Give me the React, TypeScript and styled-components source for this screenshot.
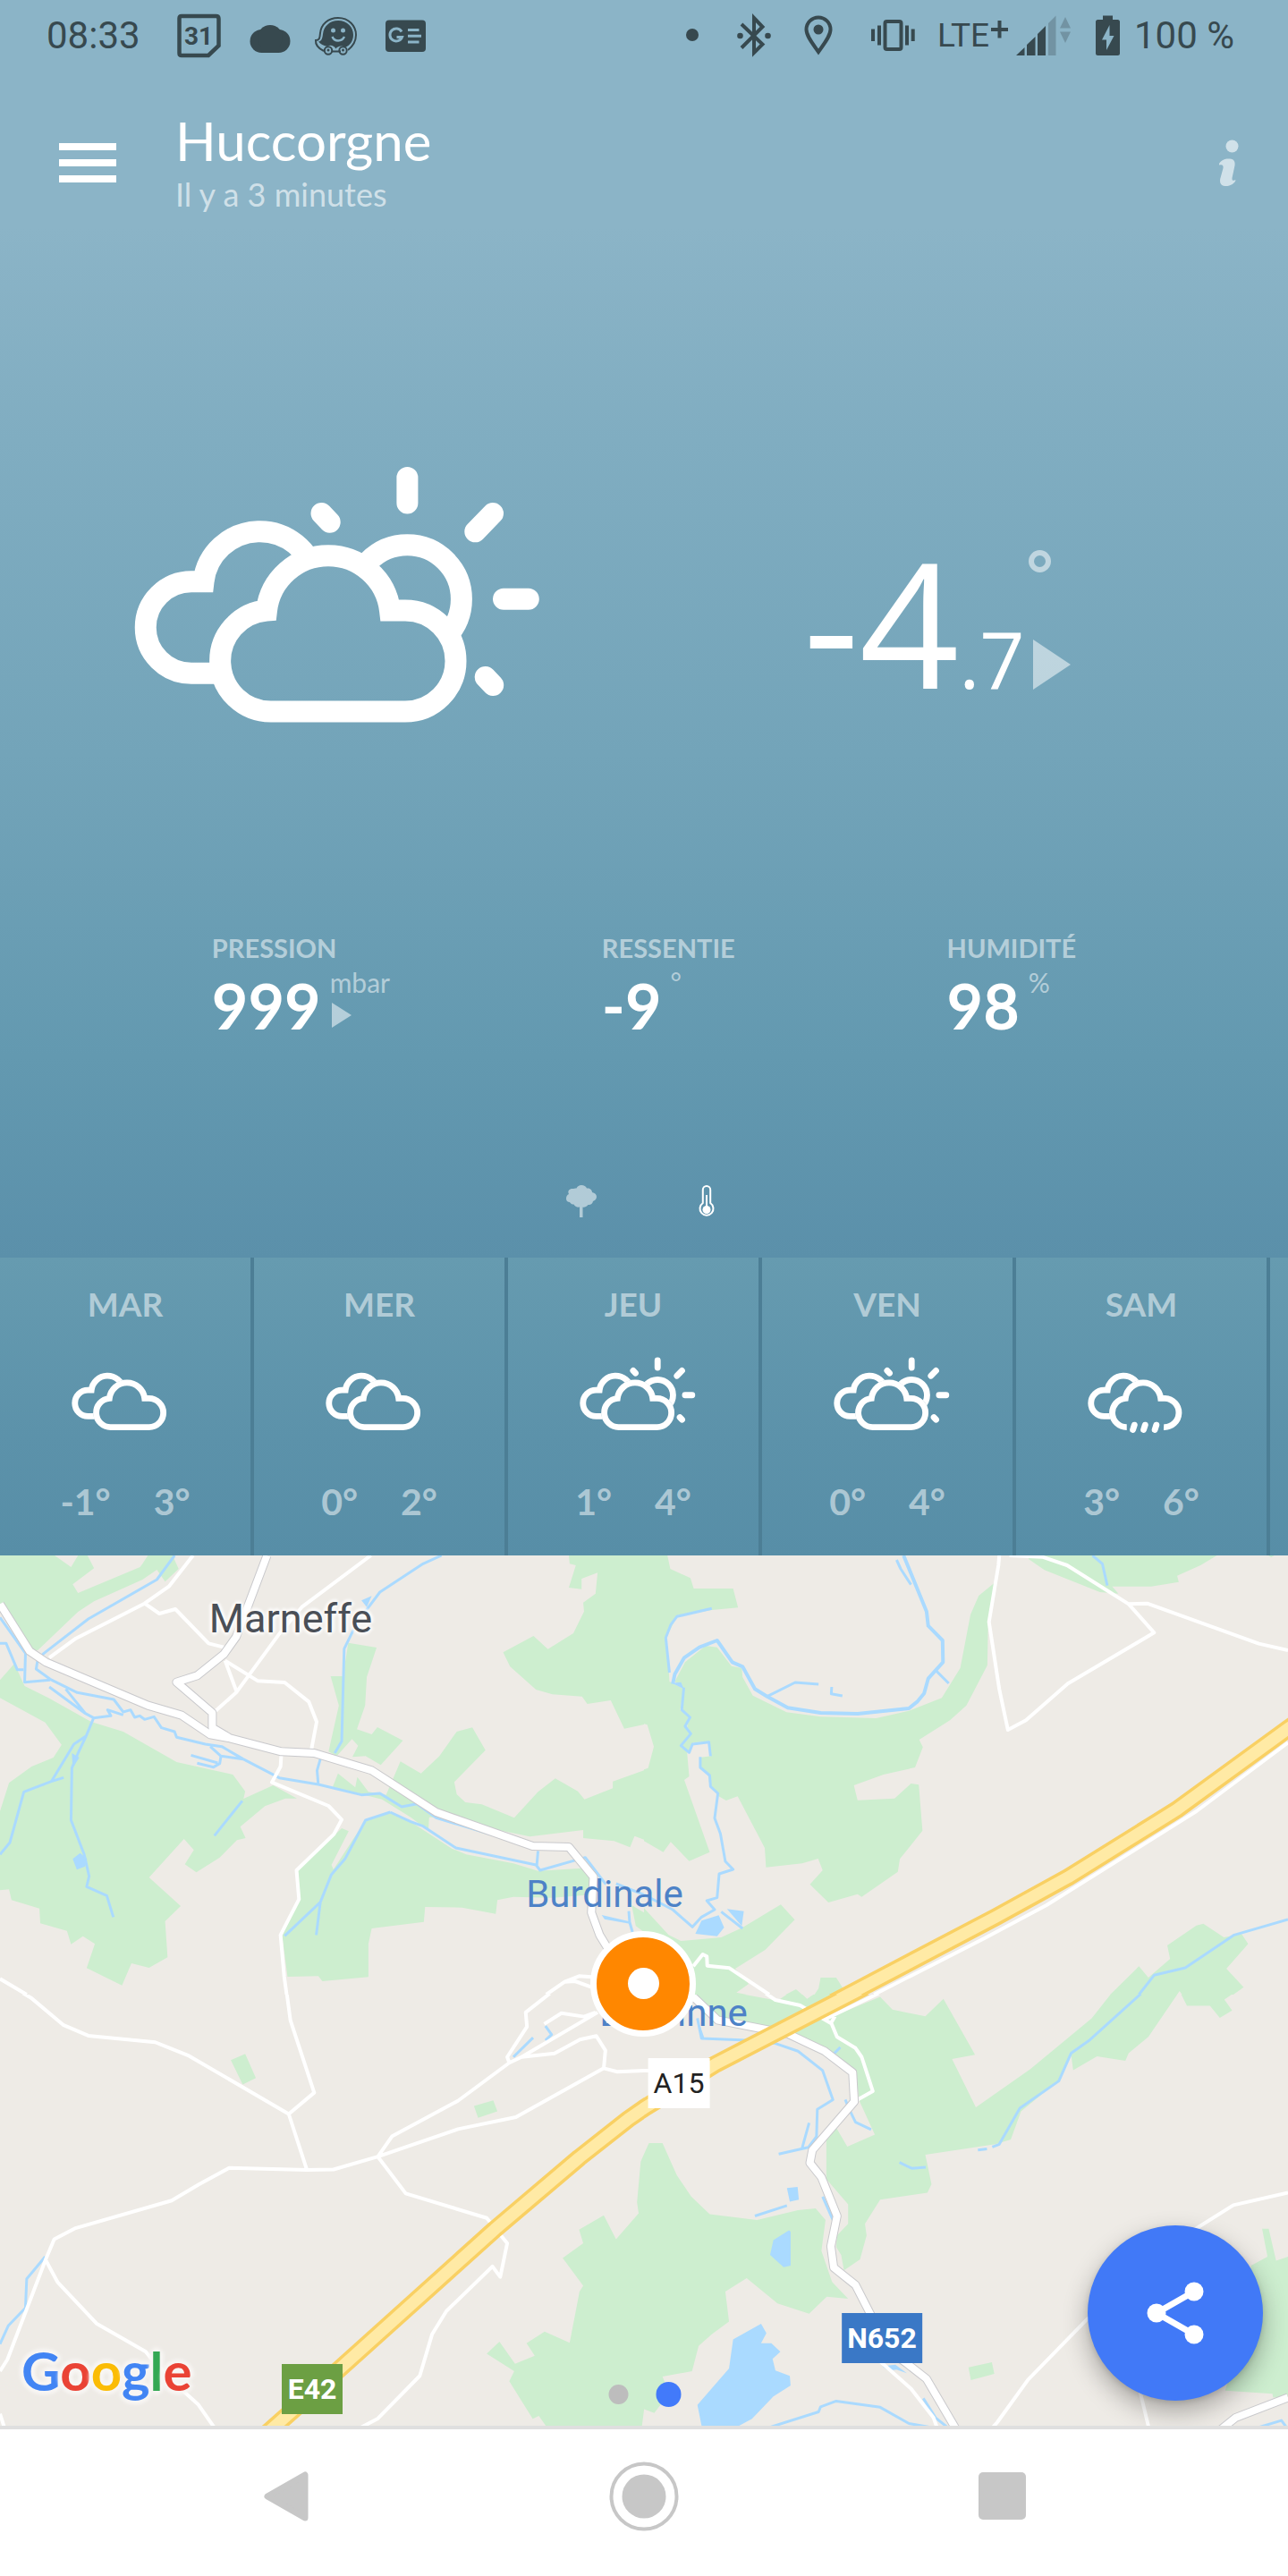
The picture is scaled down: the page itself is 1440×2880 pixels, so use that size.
import React, { useId } from "react";
import styled, { createGlobalStyle } from "styled-components";

const GlobalStyle = createGlobalStyle`
  *, *::before, *::after { box-sizing: border-box; }
  html, body { margin: 0; padding: 0; background: #ffffff; }
  button { margin: 0; padding: 0; border: 0; background: none; font: inherit; color: inherit; cursor: pointer; }
  ul, h1, p, dl, dd, dt { margin: 0; padding: 0; list-style: none; }
  svg { display: block; }
`;

const soft = "rgba(255, 255, 255, 0.52)";
const ink = "#37494f";

const Screen = styled.div`
  display: flex;
  flex-direction: column;
  font-family: Lato, "Open Sans", sans-serif;
  color: #ffffff;
  overflow: hidden;
`;

const Sky = styled.section`
  display: flex;
  flex-direction: column;
  background: linear-gradient(
    #8bb4c7 0%,
    #8bb4c7 18%,
    #80adc1 35%,
    #73a4b9 60%,
    #6399b0 84%,
    #5b90aa 100%
  );
`;

/* ---------- status bar ---------- */

const StatusBar = styled.div`
  display: flex;
  justify-content: space-between;
  align-items: center;
  height: 80px;
  padding: 0 60px 0 52px;
  color: ${ink};
  font-family: Roboto, sans-serif;
  font-size: 42px;
  line-height: 50px;
  white-space: nowrap;
`;

const StatusGroup = styled.div`
  display: flex;
  align-items: center;
`;

const StatusText = styled.span<{ $before?: number }>`
  margin-left: ${(p) => p.$before ?? 0}px;
`;

const Network = styled.span`
  margin-left: 25px;
  font-size: 37px;
`;

const StatusGlyph = styled.svg<{ $before: number }>`
  flex: none;
  margin-left: ${(p) => p.$before}px;
  height: 50px;
  fill: ${ink};
  stroke: none;
`;

const GlyphText = styled.text`
  font-family: Roboto, sans-serif;
  font-weight: 700;
  font-size: 28px;
`;

function Glyph({
  x,
  w,
  before,
  children,
}: {
  x: number;
  w: number;
  before: number;
  children: React.ReactNode;
}) {
  return (
    <StatusGlyph $before={before} width={w} viewBox={`${x} 15 ${w} 50`} aria-hidden="true">
      {children}
    </StatusGlyph>
  );
}

function Status() {
  return (
    <StatusBar>
      <StatusGroup>
        <StatusText>08:33</StatusText>
        <Glyph x={197} w={50} before={40}>
          <path
            d="M203 18H241.500Q244.500 18 244.500 21V51L233 62H203Q200.500 62 200.500 59.500V20.500Q200.500 18 203 18Z"
            fill="none"
            stroke={ink}
            strokeWidth="4.500"
          />
          <GlyphText x={222} y={50} textAnchor="middle">
            31
          </GlyphText>
        </Glyph>
        <Glyph x={279} w={46} before={32}>
          <circle cx="292.500" cy="46" r="13" />
          <circle cx="311.500" cy="46" r="13" />
          <circle cx="302" cy="42" r="14" />
          <rect x="292" y="44" width="20" height="15" />
        </Glyph>
        <Glyph x={351} w={49} before={26}>
          <path
            d="M362 57C356 54 352.500 50 353 45C357 45 357.500 43 358 37C359 27 367 20 378 20C390 20 398 29 398 39C398 47 394 52 389 56"
            fill="none"
            stroke={ink}
            strokeWidth="2"
          />
          <path d="M366 52C361 51 358 49 356 46.500C360 46 360.500 42 361 38C362 29 369 23 378 23C388 23 395 30 395 39C395 46 391 51 386 53C382 50 377 52 375.500 54.500C373 50.500 369 50 366 52Z" />
          <circle cx="372.500" cy="34" r="2.500" fill="#8bb4c7" />
          <circle cx="383.500" cy="34" r="2.500" fill="#8bb4c7" />
          <path d="M371.500 41C374 47 382 47 385 41" fill="none" stroke="#8bb4c7" strokeWidth="2.500" />
          <path d="M371 57.500H381" stroke={ink} strokeWidth="2" />
          <circle cx="367" cy="56.500" r="4.200" fill="none" stroke={ink} strokeWidth="2" />
          <circle cx="383.500" cy="56.500" r="4.200" fill="none" stroke={ink} strokeWidth="2" />
          <circle cx="367" cy="56" r="1.500" />
          <circle cx="383.500" cy="56" r="1.500" />
        </Glyph>
        <Glyph x={431} w={45} before={31}>
          <rect x="431" y="22.500" width="45" height="35.500" rx="4" />
          <path
            d="M449 35.500A7 7 0 1 0 449.500 41.500H443.500"
            fill="none"
            stroke="#8bb4c7"
            strokeWidth="3"
          />
          <path d="M456 33.500H468.500M456 40.300H471M456 47H468.500" stroke="#8bb4c7" strokeWidth="3" />
        </Glyph>
      </StatusGroup>
      <StatusGroup>
        <Glyph x={767} w={14} before={0}>
          <circle cx="774" cy="39" r="7" />
        </Glyph>
        <Glyph x={824} w={38} before={43}>
          <path
            d="M829 27L852.500 49.500L843 59V20L852.500 30L829 53.500"
            fill="none"
            stroke={ink}
            strokeWidth="4"
          />
          <circle cx="827.500" cy="40" r="3.300" />
          <circle cx="858.500" cy="40" r="3.300" />
        </Glyph>
        <Glyph x={899} w={32} before={37}>
          <path
            d="M915 58C908 48 901.500 40 901.500 33A13.500 13.500 0 0 1 928.500 33C928.500 40 922 48 915 58Z"
            fill="none"
            stroke={ink}
            strokeWidth="4"
          />
          <circle cx="915" cy="33" r="5.500" />
        </Glyph>
        <Glyph x={974} w={49} before={43}>
          <rect x="989.500" y="24" width="18" height="31" rx="2" fill="none" stroke={ink} strokeWidth="4" />
          <path d="M976 32.500V46M983 28.500V50.500M1014 28.500V50.500M1020.700 32.500V46" stroke={ink} strokeWidth="4" />
        </Glyph>
        <Network>LTE</Network>
        <Glyph x={1109} w={19} before={2}>
          <path d="M1118.500 23V42.500M1109 33H1128" stroke={ink} strokeWidth="4" />
        </Glyph>
        <Glyph x={1137} w={62} before={9}>
          <path d="M1137 62L1146.500 53V62ZM1149 50L1158.500 41V62H1149ZM1161 38L1170 29V62H1161Z" />
          <path
            d="M1173 26L1181.500 17.500V62H1173ZM1186 31.500L1192 19L1198 31.500ZM1186 35.500H1198L1192 48Z"
            opacity="0.300"
          />
        </Glyph>
        <Glyph x={1226} w={27} before={27}>
          <path d="M1234 17.500H1245V22H1250.500Q1253 22 1253 24.500V59.500Q1253 62 1250.500 62H1228.500Q1226 62 1226 59.500V24.500Q1226 22 1228.500 22H1234Z" />
          <path d="M1241.500 28L1233 44.500H1238V56L1246.500 40H1241.500Z" fill="#8bb4c7" />
        </Glyph>
        <StatusText $before={16}>100 %</StatusText>
      </StatusGroup>
    </StatusBar>
  );
}

/* ---------- app bar ---------- */

const AppBar = styled.header`
  display: flex;
  align-items: flex-start;
  padding: 40px 55px 0 66px;
`;

const MenuButton = styled.button`
  display: flex;
  flex-direction: column;
  gap: 10px;
  width: 64px;
  padding: 40px 0 36px;

  span {
    height: 8px;
    background: #ffffff;
  }
`;

const Place = styled.div`
  flex: 1;
  padding-left: 66px;
`;

const PlaceName = styled.h1`
  font-size: 60px;
  line-height: 74px;
  font-weight: 400;
`;

const Updated = styled.p`
  font-size: 36px;
  line-height: 46px;
  color: rgba(255, 255, 255, 0.6);
`;

const InfoButton = styled.button`
  padding-top: 36px;
`;

/* ---------- current weather ---------- */

const Current = styled.div`
  display: grid;
  grid-template-columns: 1fr 1fr;
  justify-items: center;
  align-items: start;
  padding-top: 280px;
`;

const Temperature = styled.div`
  display: flex;
  justify-self: start;
  gap: 4px;
  margin-top: 75px;
  padding-left: 178px;
  font-family: "Open Sans", "Noto Sans", sans-serif;
  font-weight: 500;
`;

const Degrees = styled.span`
  font-size: 195px;
  line-height: 200px;
  white-space: nowrap;

  small {
    font-size: 88px;
    line-height: 88px;
  }
`;

const TemperatureSide = styled.span`
  display: flex;
  flex-direction: column;
  justify-content: space-between;
  padding: 20px 0 24px;
`;

const Ring = styled.span`
  width: 25px;
  height: 25px;
  border: 6px solid ${soft};
  border-radius: 50%;
`;

const Trend = styled.svg`
  fill: ${soft};
`;

const Metrics = styled.dl`
  display: flex;
  justify-content: space-evenly;
  padding-top: 222px;
`;

const MetricName = styled.dt`
  font-size: 29px;
  line-height: 36px;
  font-weight: 700;
  color: ${soft};
`;

const MetricValue = styled.dd`
  display: flex;
  gap: 10px;
  margin-top: 6px;
  font-size: 70px;
  line-height: 80px;
  font-weight: 700;
`;

const Unit = styled.span`
  display: flex;
  flex-direction: column;
  gap: 9px;
  font-size: 30px;
  line-height: 28px;
  font-weight: 400;
  color: ${soft};
`;

const Tabs = styled.nav`
  display: flex;
  justify-content: center;
  gap: 68px;
  padding: 143px 0 27px;
`;

const TabButton = styled.button<{ $active?: boolean }>`
  display: grid;
  place-items: center;
  width: 72px;
  height: 72px;
  color: ${(p) => (p.$active ? "#ffffff" : soft)};
`;

/* ---------- weather icons ---------- */

type Weather = "cloudy" | "sunny" | "rainy";

const FRONT =
  "M303 795.500A56.600 56.600 0 0 1 298 682.500A69.500 69.500 0 0 1 436 682.500H453A56.500 56.500 0 0 1 453 795.500Z";
const FRONT_OPEN =
  "M303 795.500A56.600 56.600 0 0 1 298 682.500A69.500 69.500 0 0 1 436 682.500H453A56.500 56.500 0 0 1 448 795.500";

function WeatherIcon({ kind, width }: { kind: Weather; width: number }) {
  const id = useId();
  return (
    <svg
      width={width}
      viewBox="104 520 512 300"
      fill="none"
      stroke="#ffffff"
      strokeWidth="24"
      role="img"
      aria-label={kind}
    >
      <mask id={id} maskUnits="userSpaceOnUse" x="104" y="520" width="512" height="300">
        <rect x="104" y="520" width="512" height="300" fill="#ffffff" stroke="none" />
        <path d={FRONT} fill="#000000" stroke="#000000" strokeWidth="22" />
      </mask>
      <g mask={`url(#${id})`}>
        <path d="M262 752.800H214A51.200 51.200 0 0 1 214 650.300H227.500A63.500 63.500 0 0 1 353 646" />
        {kind === "sunny" && <circle cx="455.400" cy="669.800" r="60.500" />}
      </g>
      <path d={kind === "rainy" ? FRONT_OPEN : FRONT} />
      {kind === "sunny" && (
        <path
          strokeLinecap="round"
          d="M455.400 534V562.500M563 669.800H590.800M551 574L531.300 594.300M359.500 574L368.700 583.700M542.700 757L551.200 766"
        />
      )}
      {kind === "rainy" && (
        <path strokeLinecap="round" d="M333 787L327 806M375 787L369 806M419 787L413 806" />
      )}
    </svg>
  );
}

/* ---------- forecast ---------- */

const Forecast = styled.ul`
  display: flex;
  overflow: hidden;
  background: linear-gradient(#669bb0, #5c92aa 60%, #578ea7);
`;

const Day = styled.li`
  flex: 0 0 284px;
  display: flex;
  flex-direction: column;
  align-items: center;
  padding: 30px 0 34px;
  border-right: 4px solid #4c7e95;
  color: ${soft};
  font-weight: 700;
`;

const DayName = styled.span`
  margin-bottom: 37px;
  font-size: 37px;
  line-height: 44px;
`;

const DayRange = styled.span`
  display: flex;
  gap: 48px;
  margin-top: 50px;
  font-size: 41px;
  line-height: 52px;
`;

const days: { name: string; kind: Weather; low: string; high: string }[] = [
  { name: "MAR", kind: "cloudy", low: "-1°", high: "3°" },
  { name: "MER", kind: "cloudy", low: "0°", high: "2°" },
  { name: "JEU", kind: "sunny", low: "1°", high: "4°" },
  { name: "VEN", kind: "sunny", low: "0°", high: "4°" },
  { name: "SAM", kind: "rainy", low: "3°", high: "6°" },
];

/* ---------- map ---------- */

const MapPanel = styled.section`
  position: relative;
  overflow: hidden;
  background: #eeebe6;
  font-family: Roboto, sans-serif;
`;

const MapSvg = styled.svg`
  width: 100%;
  height: auto;

  path {
    vector-effect: non-scaling-stroke;
    stroke-linejoin: round;
  }
`;

const Wood = styled.path`
  fill: #cdeecf;
`;
const Water = styled.path`
  fill: #aadaff;
`;
const Stream = styled.path`
  fill: none;
  stroke: #aadaff;
  stroke-width: 3px;
`;
const River = styled(Stream)`
  stroke-width: 4px;
`;
const Lane = styled.path`
  fill: none;
  stroke: #ffffff;
  stroke-width: 4px;
`;
const RoadCase = styled.path`
  fill: none;
  stroke: #c9c9cc;
  stroke-width: 10px;
`;
const Road = styled(RoadCase)`
  stroke: #ffffff;
  stroke-width: 8px;
`;
const MotorwayCase = styled.path`
  fill: none;
  stroke: #f9d063;
  stroke-width: 20px;
`;
const Motorway = styled(MotorwayCase)`
  stroke: #ffeaa5;
  stroke-width: 13px;
`;

interface Tile {
  id: string;
  transform: string;
  clip: [number, number];
  wood: string;
  water: string;
  stream: string;
  river: string;
  lane: string;
  road: string;
  motorway: string;
}

const tiles: Tile[] = [
  {
    id: "nw",
    transform: "translate(0 -9) scale(0.459184 0.333333)",
    clip: [0, 1500],
    wood:
      "M0 0L133 27 173 66 190 27 213 27 229 70 177 124 190 153 341 66 347 55 360 27 420 27 435 72 402 115 382 75 347 108 229 181 190 216 92 345 70 345 47 290 80 162 105 178 110 236 92 300 72 340 0 190Z" +
      "M35 390L60 465 118 505 222 585 300 618 430 720 567 762 597 818 593 843 665 798 723 842 695 842 645 868 585 937 598 975 577 982 535 1040 478 1090 450 1063 472 1015 448 978 363 1107 440 1203 402 1254 408 1375 363 1410 320 1395 297 1469 211 1411 231 1330 202 1304 173 1331 163 1286 98 1261 96 1211 28 1183 22 1147 0 1150 0 885 22 790 77 735 130 705 150 662 110 587 0 505 0 445Z" +
      "M848 320L917 336 893 435 889 530 869 610 905 627 919 603 981 648 927 730 890 700 858 703 872 665 857 643 820 700 800 685 825 530 805 432 835 432Z" +
      "M823 758L865 805 870 770 897 820 940 830 975 718 1025 758 1070 700 1112 618 1150 604 1182 680 1106 787 1112 828 1133 855 1173 862 1252 907 1310 820 1352 775 1407 818 1423 845 1492 808 1492 785 1568 748 1568 980 1545 968 1534 1006 1495 985 1420 975 1420 948 1290 970 1060 905 1045 905 1043 950 1000 905 930 845 810 803Z" +
      "M1385 27L1387 55 1402 60 1385 135 1416 140 1416 105 1455 85 1450 155 1420 185 1422 215 1396 288 1334 341 1299 297 1225 352 1242 400 1305 477 1345 493 1417 500 1430 525 1487 513 1520 608 1568 594 1568 0Z" +
      "M890 915L950 890 1000 920 1100 1010 1135 1030 1250 1060 1310 1085 1435 1075 1440 1165 1345 1175 1250 1172 1211 1183 1207 1229 1125 1208 1035 1206 1032 1256 905 1278 897 1330 897 1441 785 1455 775 1438 700 1440 687 1303 725 1180 722 1085 832 942 849 952 807 1065 812 1080Z" +
      "M1538 1200L1568 1225 1568 1290 1548 1270Z",
    water:
      "M177 1045L195 1025 212 1045 207 1070 187 1081ZM880 178L905 163 893 200ZM175 690L193 705 177 740ZM1465 1233L1533 1255 1533 1262 1472 1247Z",
    stream:
      "M425 27L382 108 215 240 107 355 92 375 88 408 122 442 188 487 277 510 300 552 318 545 328 570 340 565 352 577 375 568 393 605 425 618 430 637 500 660 540 668 592 710 680 773 775 795 880 830 925 825 978 870 1015 860 1062 907 1290 1002" +
      "M0 235L62 355 60 452 122 445M0 322L15 322 42 410 57 410M120 468L208 557 228 572 270 565 262 545 300 562M160 475L208 557M228 572L210 632 190 690 175 740 173 915 205 1030 217 1103 211 1138 260 1168 276 1240M210 632L180 660 125 785 58 820 24 990 0 1030M125 785L155 772M590 850L522 967M465 697L530 723M480 724L520 737 535 725 538 700 512 668M538 700L592 710" +
      "M1075 27L1030 55 925 150 870 250 838 340 832 650 815 690M780 710L772 748 775 795M950 888L1000 920 1030 935 1110 1008 1305 1065 1315 1083 1425 1040 1475 1130M950 888L890 915 840 1045 807 1097 780 1190 693 1303M780 1190L770 1300M1310 1018L1307 1065M1531 1220L1533 1257 1540 1290M1500 1128L1568 1165",
    river: "",
    lane:
      "M470 27L412 130 352 188 185 305 120 370M352 188L388 222 427 207 508 322 545 335M903 27L735 200 680 290 575 487 525 548M548 380L577 487M548 380L628 448 693 453 752 518 771 585 758 680M685 695L683 735 662 788 800 867 832 913 813 962 722 1083 728 1180 683 1300 692 1440 698 1500M0 1447L65 1500M1330 1500L1375 1457 1410 1438 1440 1441M1375 1457L1400 1455 1440 1475",
    road:
      "M0 190L72 348 112 385 360 530 442 563 512 628 560 640 685 685 765 690 905 748 1062 888 1297 1002 1385 1005 1445 1105 1440 1225 1460 1300 1480 1345M650 27L600 210 575 300 545 358 480 430 430 452 517 555 517 605 560 640",
    motorway: "",
  },
  {
    id: "ne",
    transform: "translate(720 -9) scale(0.459184 0.333333)",
    clip: [0, 1500],
    wood:
      "M0 0L57 0 57 27 64 72 113 103 121 138 217 138 229 202 165 210 80 232 55 300 62 450 97 475 88 545 112 570 100 600 115 625 90 660 105 690 110 768 98 780 160 1022 110 1052 65 988 47 1022 0 985 0 745 10 740 24 668 8 595 0 592Z" +
      "M150 330L178 335 213 398 238 405 240 435 265 497 347 553 430 568 565 573 645 548 725 505 770 405 795 225 815 162 855 117 838 250 836 395 785 530 745 580 670 645 679 670 660 738 583 762 511 798 520 848 610 842 650 792 669 796 678 950 623 1045 618 1088 530 1172 520 1163 449 1191 404 1130 435 1083 424 1044 385 1060 297 1073 294 1008 228 835 200 849 182 835 160 800 155 755 135 735 135 705 163 700 160 650 120 655 105 690 90 660 115 625 105 600 112 570 90 540 97 475 75 450 100 385Z" +
      "M935 27L1395 27 1355 60 1298 95 1302 116 1235 131 1140 131 1155 155 1110 150 975 76 937 40ZM1520 27L1535 27 1527 33Z" +
      "M0 1210L60 1300 90 1320 188 1308 240 1275 333 1198 367 1249 295 1350 222 1413 255 1464 225 1493 250 1500 0 1500Z" +
      "M1345 1268L1362 1262 1412 1308 1455 1297 1471 1330 1418 1413 1460 1475 1435 1500 1310 1500 1304 1488 1298 1500 1135 1500 1150 1480 1205 1405 1228 1443 1281 1380 1274 1335Z" +
      "M415 1500L425 1480 430 1443 468 1443 485 1480 460 1500ZM345 1500L370 1482 385 1500Z",
    water:
      "M140 1252L182 1234 195 1275 178 1304 125 1296ZM202 1213L243 1220 238 1270ZM68 455L90 452 97 475Z",
    stream:
      "M165 205L80 232 65 260 53 303 62 420M300 500L368 453 425 459M457 468L456 491 483 498M710 412L742 456M615 42L625 72 650 125M97 470L92 545 112 570 100 600 114 625 90 665 110 688 118 660 158 653 162 700M137 703L137 738 160 765 162 802 180 825 172 908 186 960 198 1053 217 1080 183 1095 178 1175 153 1185 172 1215 140 1240 118 1273 70 1215 0 1165M188 1222L240 1278M1092 27L1116 55 1128 128M1568 1248L1437 1300 1318 1410 1242 1435 1205 1500",
    river:
      "M70 458L75 425 98 370 135 335 178 312 215 385 240 400 270 475 300 500 350 538 430 555 520 558 645 540 665 518 682 490 692 440 728 385 727 312 692 263 688 215 632 27",
    lane:
      "M865 27L863 60 840 250 865 475 886 612 930 580 1032 457 1242 286 1180 190 1030 60 970 32 890 27M1180 190L1225 188 1497 323 1568 345M1568 655L1345 885 980 1200 830 1310 560 1500M120 1405L143 1365 153 1372 154 1403 208 1411 305 1500",
    road: "",
    motorway: "M1600 577L1568 608 1297 880 1033 1106 855 1241 497 1500 450 1534",
  },
  {
    id: "sw",
    transform: "translate(0 461) scale(0.459184 0.433673)",
    clip: [69.2, 1200],
    wood:
      "M562 238L597 222 623 284 591 301ZM1154 356L1201 342 1211 370 1164 387Z" +
      "M1568 480L1560 500 1551 605 1555 633 1500 700 1470 638 1410 675 1420 710 1370 748 1420 820 1411 835 1387 967 1326 938 1282 968 1302 1000 1254 1021 1216 964 1185 995 1252 1040 1240 1066 1297 1163 1312 1155 1335 1190 1562 1190 1568 1140Z",
    water: "",
    stream: "M110 745L65 802 62 877 20 923 0 970M1298 180L1250 230M1328 150L1343 172 1328 187",
    river: "",
    lane:
      "M0 32L75 77 155 148 215 175 378 192 460 227 703 377 747 520M690 0L707 135 765 322 703 377M0 1040L18 1010 112 750 132 700 182 672 418 600 485 558 558 516 747 521 812 520 920 487 1115 416 1256 385 1470 259 1503 268 1568 265M112 755L140 810 235 917 355 990 370 1010 450 1095 482 1125 525 1190M0 1150L12 1190M920 487L955 434 1115 343 1240 245 1270 230 1350 221 1412 185 1452 176 1474 213 1470 259M1240 245L1235 230 1283 152 1280 115 1375 36 1410 20 1440 25M1375 36L1400 34 1440 48M1270 230L1455 115M1325 145L1367 117 1422 126 1450 115M920 487L988 582 1185 645 1235 710 1218 797 1199 770 1087 885 1052 945 1022 1052 920 1162 870 1190",
    road: "",
    motorway: "M1600 340L1568 362 1530 390 1410 490 1205 674 827 1034 650 1200",
  },
  {
    id: "se",
    transform: "translate(720 461) scale(0.459184 0.433673)",
    clip: [69.2, 1200],
    wood:
      "M0 0L205 0 255 42 225 65 325 85 370 53 397 80 425 60 432 25 470 25 485 50 400 110 440 130 400 170 360 168 180 135 125 80Z" +
      "M575 75L605 108 685 125 729 80 806 224 750 235 808 360 940 262 1090 130 1150 50 1202 0 1418 0 1460 48 1413 82 1432 110 1402 129 1378 98 1322 98 1304 60 1228 178 1180 220 1172 240 1103 228 1045 264 1040 225 1010 290 918 370 893 443 855 455 685 482 700 558 690 580 575 598 538 660 542 690 526 752 487 780 480 740 468 720 470 690 497 660 497 610 444 545 444 430 468 412 495 461 562 430 525 345 515 270 440 215 350 165 460 125Z" +
      "M0 480L12 452 45 452 80 535 115 590 160 635 275 650 375 625 418 620 442 650 432 730 458 810 497 853 445 848 402 892 325 865 250 800 198 835 207 912 165 945 133 975 117 1040 45 1054 55 1080 45 1120 25 1148 0 1138Z" +
      "M790 1030L847 1017 853 1047 796 1063ZM1505 673L1521 673 1539 755 1568 745 1568 1105 1532 1108 1530 1098 1415 1090 1440 1000 1470 900 1478 768 1518 745Z",
    water:
      "M348 568L374 565 377 598 355 603ZM315 702L353 677 357 680 357 768 340 772 307 740ZM217 958L285 918 298 942 285 968 310 968 332 990 313 1008 320 1038 355 1052 357 1077 315 1105 263 1163 215 1190 142 1190 130 1127 207 1033ZM580 1027L612 1023 640 1045 615 1036 595 1038ZM130 130L140 182 148 184Z",
    stream:
      "M130 130L140 182 250 187 320 195 375 215 435 265 460 340 422 365 420 435 400 463 328 480M402 400L385 465M490 340L500 365 515 398 553 417M478 205L462 222M1320 0L1242 18 1215 62 1083 188 1040 220 1010 292 915 362 865 455 848 462M813 470L835 467M622 502L652 517 686 514M270 640L348 613M435 590L460 650M290 1190L425 1145 430 1132 468 1117 575 1133 645 1175 700 1185M680 1110L710 1160 745 1190M1480 1190L1552 1167 1568 1190",
    river: "",
    lane:
      "M205 0L320 83 380 97 455 143 465 125M700 0L440 133M455 140L470 178 515 207 530 230 557 318 520 340M0 265L20 265M570 1010L650 1085 705 1160 715 1190M1568 580L1435 612 1340 675 1080 905 935 1062 860 1172 845 1190M1205 1080L1230 1190",
    road:
      "M115 70L125 80 180 135 350 170 440 215 508 270 512 345 410 470 404 503 432 540 470 640 455 718 462 773 515 818 550 890 600 990 640 1020 688 1060 760 1190M1568 1108L1440 1160 1405 1190",
    motorway: "M674 -25L628 0 175 248 0 362 -32 384",
  },
];

function MapDrawing() {
  return (
    <MapSvg viewBox="0 0 1440 973" aria-hidden="true">
      {tiles.map((t) => (
        <g key={t.id} transform={t.transform}>
          <clipPath id={`tile-${t.id}`}>
            <rect x="0" y={t.clip[0]} width="1568" height={t.clip[1] - t.clip[0]} />
          </clipPath>
          <g clipPath={`url(#tile-${t.id})`}>
            <Wood d={t.wood} />
            <Water d={t.water} />
            <Stream d={t.stream} />
            <River d={t.river} />
            <Lane d={t.lane} />
            <RoadCase d={t.road} />
            <Road d={t.road} />
            <MotorwayCase d={t.motorway} />
            <Motorway d={t.motorway} />
          </g>
        </g>
      ))}
    </MapSvg>
  );
}

interface Pinned {
  $x: number;
  $y: number;
}

/* Everything pinned on the map is centred on its point, in a 1440 by 973 field. */
const Pin = styled.span<Pinned>`
  position: absolute;
  left: ${(p) => (p.$x / 1440) * 100}%;
  top: ${(p) => (p.$y / 973) * 100}%;
  transform: translate(-50%, -50%);
  white-space: nowrap;
`;

const Town = styled(Pin)`
  font-size: 45px;
  line-height: 52px;
  color: #4a4f57;
  text-shadow: 0 0 5px #fbfaf9, 3px 0 3px #fbfaf9, -3px 0 3px #fbfaf9, 0 3px 3px #fbfaf9, 0 -3px 3px #fbfaf9;
`;

const Stretch = styled(Pin)`
  font-size: 42px;
  line-height: 48px;
  color: #4d82c7;
`;

const Shield = styled(Pin)<{ $bg: string; $dark?: boolean }>`
  padding: 0 6px;
  min-width: 68px;
  text-align: center;
  font-size: 32px;
  line-height: 56px;
  font-weight: ${(p) => (p.$dark ? 400 : 700)};
  color: ${(p) => (p.$dark ? "#222222" : "#ffffff")};
  background: ${(p) => p.$bg};
`;

const Marker = styled(Pin)`
  display: grid;
  place-items: center;
  width: 118px;
  height: 118px;
  border: 7px solid #ffffff;
  border-radius: 50%;
  background: #ff8700;

  &::after {
    content: "";
    width: 35px;
    height: 35px;
    border-radius: 50%;
    background: #ffffff;
  }
`;

const Logo = styled.span`
  position: absolute;
  left: 24px;
  bottom: 26px;
  font-family: Lato, sans-serif;
  font-size: 60px;
  line-height: 72px;
  font-weight: 700;
  text-shadow: 0 0 6px #f8f6f4, 4px 0 4px #f8f6f4, -4px 0 4px #f8f6f4, 0 4px 4px #f8f6f4, 0 -4px 4px #f8f6f4;
`;

const Letter = styled.span<{ $color: string }>`
  color: ${(p) => p.$color};
`;

const Pager = styled.div`
  position: absolute;
  left: 50%;
  bottom: 21px;
  transform: translateX(-50%);
  display: flex;
  align-items: center;
  gap: 31px;
  padding-left: 2px;
`;

const Dot = styled.button<{ $active?: boolean }>`
  width: ${(p) => (p.$active ? 28 : 22)}px;
  height: ${(p) => (p.$active ? 28 : 22)}px;
  border-radius: 50%;
  background: ${(p) => (p.$active ? "#427afa" : "#bdbdbd")};
`;

const ShareButton = styled.button`
  position: absolute;
  right: 28px;
  bottom: 28px;
  display: grid;
  place-items: center;
  width: 196px;
  height: 196px;
  border-radius: 50%;
  background: #4179f7;
  box-shadow: 0 12px 28px rgba(0, 0, 0, 0.3), 0 2px 6px rgba(0, 0, 0, 0.12);
`;

/* ---------- navigation bar ---------- */

const SystemNav = styled.nav`
  display: grid;
  grid-template-columns: repeat(3, 1fr);
  height: 168px;
  padding: 0 120px;
  border-top: 4px solid #dfdfdf;
  background: #ffffff;
`;

const NavButton = styled.button`
  display: grid;
  place-items: center;
  padding-bottom: 14px;
`;

export default function App() {
  return (
    <Screen>
      <GlobalStyle />
      <Sky>
        <Status />
        <AppBar>
          <MenuButton aria-label="Menu">
            <span />
            <span />
            <span />
          </MenuButton>
          <Place>
            <PlaceName>Huccorgne</PlaceName>
            <Updated>Il y a 3 minutes</Updated>
          </Place>
          <InfoButton aria-label="Informations">
            <svg width="22" height="53" viewBox="0 0 22 53" fill="rgba(255,255,255,0.6)">
              <circle cx="14.500" cy="7.500" r="7" />
              <path d="M0 27C2 23 7 21 12 21.500C17 22 18 25 17.500 29L14.500 43C14.200 46 16 46.500 18.500 45C18 49 12 52.500 6.500 52C2 51.500 0.500 48.500 1.200 44L4.500 32C5 28.500 3.500 27.500 0 28.500Z" />
            </svg>
          </InfoButton>
        </AppBar>

        <Current>
          <WeatherIcon kind="sunny" width={512} />
          <Temperature>
            <Degrees>
              -4<small>.7</small>
            </Degrees>
            <TemperatureSide>
              <Ring />
              <Trend width="48" height="56" viewBox="0 0 48 56" aria-hidden="true">
                <path d="M5 0L47 28L5 56Z" />
              </Trend>
            </TemperatureSide>
          </Temperature>
        </Current>

        <Metrics>
          <div>
            <MetricName>PRESSION</MetricName>
            <MetricValue>
              999
              <Unit>
                mbar
                <Trend width="24" height="28" viewBox="0 0 24 28" aria-hidden="true">
                  <path d="M2 0L24 14L2 28Z" />
                </Trend>
              </Unit>
            </MetricValue>
          </div>
          <div>
            <MetricName>RESSENTIE</MetricName>
            <MetricValue>
              -9<Unit>°</Unit>
            </MetricValue>
          </div>
          <div>
            <MetricName>HUMIDITÉ</MetricName>
            <MetricValue>
              98<Unit>%</Unit>
            </MetricValue>
          </div>
        </Metrics>

        <Tabs>
          <TabButton aria-label="Extérieur">
            <svg width="34" height="36" viewBox="0 0 34 36" fill="currentColor">
              <path d="M17 0C20 0 22 1.500 23 3.500C26 3 29 5 29 8C32 8.500 34 10.500 34 13C34 15.500 32 17.500 30 18C29.500 21 27 22.500 24.500 22C22.500 24.500 20 25 18.500 24.500V36H15V24.500C12.500 25 9.500 24 8.500 21.500C6 22 4.500 20 4 19C1.500 19 0 17.500 0 15C0 12.500 1 11 3 10C1 6 4 3.500 8 4C10 3.500 11 3.500 11.500 3.500C12.500 1.500 14.500 0 17 0Z" />
            </svg>
          </TabButton>
          <TabButton $active aria-label="Température">
            <svg width="18" height="36" viewBox="0 0 18 36" fill="none" stroke="currentColor">
              <path d="M4.800 20V5.200A4.200 4.200 0 0 1 13.200 5.200V20A7.500 7.500 0 1 1 4.800 20Z" strokeWidth="2" />
              <circle cx="9" cy="27.500" r="4.500" fill="currentColor" stroke="none" />
              <path d="M9 11V26" strokeWidth="2" />
            </svg>
          </TabButton>
        </Tabs>
      </Sky>

      <Forecast>
        {days.map((d) => (
          <Day key={d.name}>
            <DayName>{d.name}</DayName>
            <WeatherIcon kind={d.kind} width={146} />
            <DayRange>
              <span>{d.low}</span>
              <span>{d.high}</span>
            </DayRange>
          </Day>
        ))}
      </Forecast>

      <MapPanel aria-label="Carte">
        <MapDrawing />
        <Town $x={325} $y={71}>
          Marneffe
        </Town>
        <Stretch $x={676} $y={379}>
          Burdinale
        </Stretch>
        <Stretch $x={753} $y={512}>
          Burdinne
        </Stretch>
        <Marker $x={719} $y={479} />
        <Shield $x={759} $y={590} $bg="#ffffff" $dark>
          A15
        </Shield>
        <Shield $x={349} $y={932} $bg="#6c9f43">
          E42
        </Shield>
        <Shield $x={986} $y={875} $bg="#3a78c6">
          N652
        </Shield>
        <Logo>
          <Letter $color="#4285f4">G</Letter>
          <Letter $color="#ea4335">o</Letter>
          <Letter $color="#fbbc05">o</Letter>
          <Letter $color="#4285f4">g</Letter>
          <Letter $color="#34a853">l</Letter>
          <Letter $color="#ea4335">e</Letter>
        </Logo>
        <Pager>
          <Dot aria-label="Page 1" />
          <Dot $active aria-label="Page 2" />
        </Pager>
        <ShareButton aria-label="Partager">
          <svg width="64" height="70" viewBox="0 0 64 70" fill="#ffffff">
            <path d="M53 11L11 35L53 59" fill="none" stroke="#ffffff" strokeWidth="7" />
            <circle cx="53" cy="11" r="10.500" />
            <circle cx="11" cy="35" r="10.500" />
            <circle cx="53" cy="59" r="10.500" />
          </svg>
        </ShareButton>
      </MapPanel>

      <SystemNav>
        <NavButton aria-label="Retour">
          <svg width="50" height="56" viewBox="0 0 50 56" fill="#c7c7c7">
            <path
              d="M46 4V52L4 28Z"
              stroke="#c7c7c7"
              strokeWidth="7"
              strokeLinejoin="round"
            />
          </svg>
        </NavButton>
        <NavButton aria-label="Accueil">
          <svg width="78" height="78" viewBox="0 0 78 78" fill="#c7c7c7">
            <circle cx="39" cy="39" r="36.500" fill="none" stroke="#c7c7c7" strokeWidth="4" />
            <circle cx="39" cy="39" r="24.500" />
          </svg>
        </NavButton>
        <NavButton aria-label="Applications récentes">
          <svg width="53" height="53" viewBox="0 0 53 53" fill="#c7c7c7">
            <rect width="53" height="53" rx="5" />
          </svg>
        </NavButton>
      </SystemNav>
    </Screen>
  );
}
